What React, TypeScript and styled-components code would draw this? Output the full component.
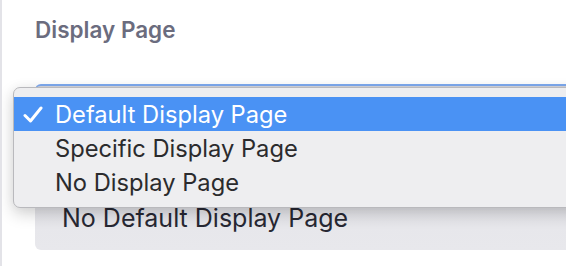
import * as React from "react";
import styled, { createGlobalStyle } from "styled-components";

const GlobalStyle = createGlobalStyle`
  html, body {
    margin: 0;
    padding: 0;
    background: #ffffff;
    overflow: hidden;
  }
  body {
    font-family: "Inter", "Liberation Sans", sans-serif;
  }
`;

const Panel = styled.div`
  width: 566px;
  height: 266px;
  box-sizing: border-box;
  border-left: 2px solid #e3e3e8;
  padding: 16px 0 0 33px;
  background: #ffffff;
  overflow: hidden;
`;

const Label = styled.div`
  font-size: 22.5px;
  font-weight: 600;
  color: #6b6c7e;
  line-height: 28px;
  margin-bottom: 40px;
`;

const SelectWrap = styled.div`
  position: relative;
`;

const SelectBox = styled.div`
  height: 166px;
  box-sizing: border-box;
  margin-right: -40px;
  border-top: 2px solid #7eaaf0;
  border-radius: 6px;
  background: linear-gradient(#d7d7dc, #e5e5ea 60%, #e8e8ec);
  display: flex;
  align-items: flex-end;
  padding: 0 0 17px 27px;
`;

const SelectValue = styled.span`
  font-size: 25px;
  color: #272833;
  line-height: 30px;
`;

const Menu = styled.ul`
  position: absolute;
  top: 3px;
  left: -22px;
  right: -60px;
  margin: 0;
  padding: 9px 0 8px;
  list-style: none;
  background: #eeeef0;
  border: 1px solid #b9b9bd;
  border-radius: 7px;
  box-shadow: 0 6px 16px rgba(0, 0, 0, 0.18), 0 0 12px rgba(0, 0, 0, 0.04);
`;

const Option = styled.li<{ $active?: boolean }>`
  display: flex;
  align-items: center;
  height: 34px;
  padding-left: 41px;
  font-size: 23.7px;
  color: ${(p) => (p.$active ? "#ffffff" : "#2b2b2d")};
  background: ${(p) => (p.$active ? "#4a92f4" : "transparent")};
  position: relative;
`;

const Check = styled.svg`
  position: absolute;
  left: 9px;
  top: 9px;
`;

const options = [
  { label: "Default Display Page", active: true },
  { label: "Specific Display Page", active: false },
  { label: "No Display Page", active: false },
];

export default function App() {
  return (
    <>
      <GlobalStyle />
      <Panel>
        <Label>Display Page</Label>
        <SelectWrap>
          <SelectBox>
            <SelectValue>No Default Display Page</SelectValue>
          </SelectBox>
          <Menu>
            {options.map((o) => (
              <Option key={o.label} $active={o.active}>
                {o.active && (
                  <Check width="20" height="17" viewBox="0 0 20 17">
                    <path
                      d="M2 9.5 L7.5 15 L18 2"
                      fill="none"
                      stroke="#ffffff"
                      strokeWidth="3"
                      strokeLinecap="round"
                      strokeLinejoin="round"
                    />
                  </Check>
                )}
                {o.label}
              </Option>
            ))}
          </Menu>
        </SelectWrap>
      </Panel>
    </>
  );
}
